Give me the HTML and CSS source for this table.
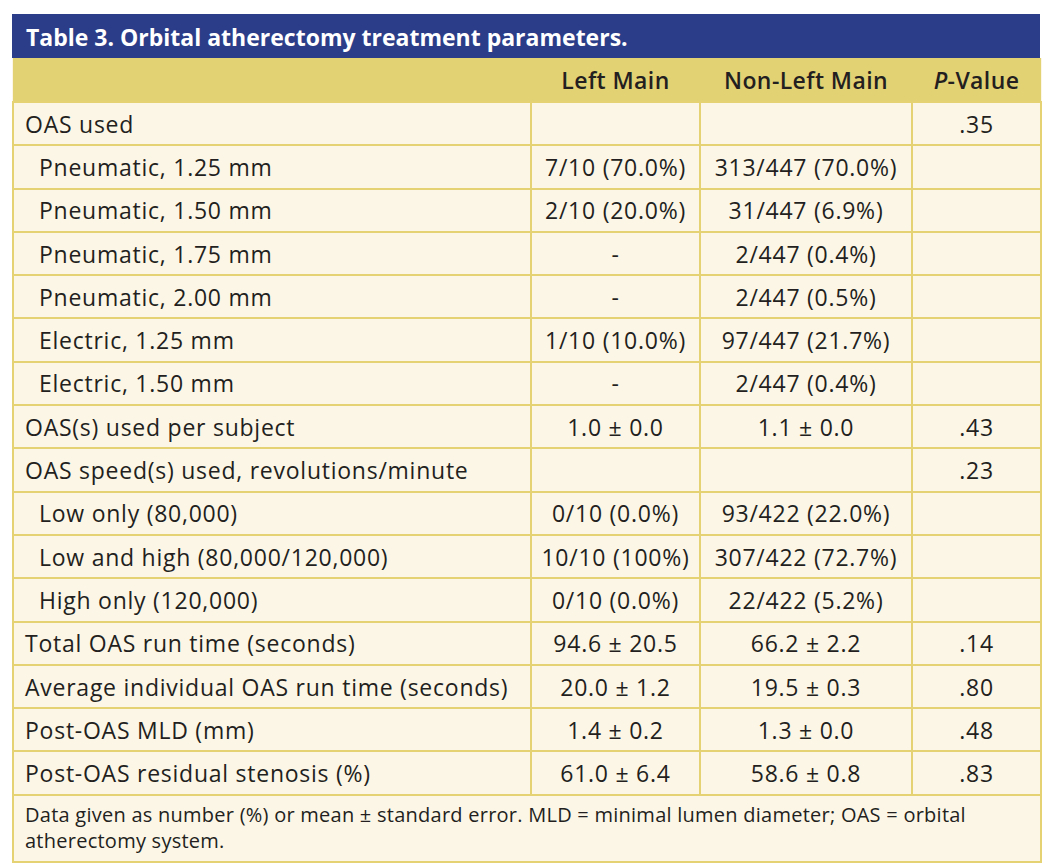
FILE: index.html
```html
<!DOCTYPE html>
<html lang="en">
<head>
<meta charset="utf-8">
<title>Table 3</title>
<link rel="stylesheet" href="styles.css">
</head>
<body>
<div class="figure">
  <div class="caption">Table 3. Orbital atherectomy treatment parameters.</div>
  <table class="data">
    <colgroup>
      <col class="c-label">
      <col class="c-lm">
      <col class="c-nlm">
      <col class="c-p">
    </colgroup>
    <thead>
      <tr>
        <th class="label"></th>
        <th>Left Main</th>
        <th>Non-Left Main</th>
        <th><i>P</i>-Value</th>
      </tr>
    </thead>
    <tbody>
      <tr><td class="label">OAS used</td><td></td><td></td><td>.35</td></tr>
      <tr><td class="label sub">Pneumatic, 1.25 mm</td><td>7/10 (70.0%)</td><td>313/447 (70.0%)</td><td></td></tr>
      <tr><td class="label sub">Pneumatic, 1.50 mm</td><td>2/10 (20.0%)</td><td>31/447 (6.9%)</td><td></td></tr>
      <tr><td class="label sub">Pneumatic, 1.75 mm</td><td>-</td><td>2/447 (0.4%)</td><td></td></tr>
      <tr><td class="label sub">Pneumatic, 2.00 mm</td><td>-</td><td>2/447 (0.5%)</td><td></td></tr>
      <tr><td class="label sub">Electric, 1.25 mm</td><td>1/10 (10.0%)</td><td>97/447 (21.7%)</td><td></td></tr>
      <tr><td class="label sub">Electric, 1.50 mm</td><td>-</td><td>2/447 (0.4%)</td><td></td></tr>
      <tr><td class="label">OAS(s) used per subject</td><td>1.0 ± 0.0</td><td>1.1 ± 0.0</td><td>.43</td></tr>
      <tr><td class="label">OAS speed(s) used, revolutions/minute</td><td></td><td></td><td>.23</td></tr>
      <tr><td class="label sub">Low only (80,000)</td><td>0/10 (0.0%)</td><td>93/422 (22.0%)</td><td></td></tr>
      <tr><td class="label sub">Low and high (80,000/120,000)</td><td>10/10 (100%)</td><td>307/422 (72.7%)</td><td></td></tr>
      <tr><td class="label sub">High only (120,000)</td><td>0/10 (0.0%)</td><td>22/422 (5.2%)</td><td></td></tr>
      <tr><td class="label">Total OAS run time (seconds)</td><td>94.6 ± 20.5</td><td>66.2 ± 2.2</td><td>.14</td></tr>
      <tr><td class="label">Average individual OAS run time (seconds)</td><td>20.0 ± 1.2</td><td>19.5 ± 0.3</td><td>.80</td></tr>
      <tr><td class="label">Post-OAS MLD (mm)</td><td>1.4 ± 0.2</td><td>1.3 ± 0.0</td><td>.48</td></tr>
      <tr><td class="label">Post-OAS residual stenosis (%)</td><td>61.0 ± 6.4</td><td>58.6 ± 0.8</td><td>.83</td></tr>
    </tbody>
    <tfoot>
      <tr><td class="note" colspan="4">Data given as number (%) or mean ± standard error. MLD = minimal lumen diameter; OAS = orbital atherectomy system.</td></tr>
    </tfoot>
  </table>
</div>
</body>
</html>
```

FILE: styles.css
```css
html, body {
  margin: 0;
  padding: 0;
  background: #ffffff;
}

body {
  font-family: "Open Sans", "Liberation Sans", sans-serif;
  color: #231f20;
}

.figure {
  width: 1028px;
  margin: 14px 0 0 12px;
}

.caption {
  background: #2b3d88;
  color: #ffffff;
  font-weight: 700;
  font-size: 23px;
  height: 44px;
  line-height: 46px;
  padding-left: 14px;
  box-sizing: border-box;
}

.data {
  width: 1028px;
  border-collapse: collapse;
  table-layout: fixed;
  background: #fcf6e7;
}

.c-label { width: 518px; }
.c-lm { width: 169px; }
.c-nlm { width: 212px; }
.c-p { width: 129px; }

.data th {
  background: #e3d274;
  height: 43px;
  padding: 0;
  font-weight: 600;
  font-size: 23px;
  letter-spacing: 0.4px;
  text-align: center;
  border: none;
}

.data td {
  border: 2px solid #e5d273;
  height: 41.3px;
  padding: 0;
  font-size: 23px;
  letter-spacing: 0.75px;
  text-align: center;
  vertical-align: middle;
  line-height: 30px;
}

.data td.label {
  text-align: left;
  padding-left: 11px;
}

.data td.sub {
  padding-left: 25px;
}

.data td.note {
  text-align: left;
  font-size: 20px;
  letter-spacing: 0.25px;
  line-height: 26px;
  padding: 6px 11px 7px 11px;
  height: auto;
}
```
